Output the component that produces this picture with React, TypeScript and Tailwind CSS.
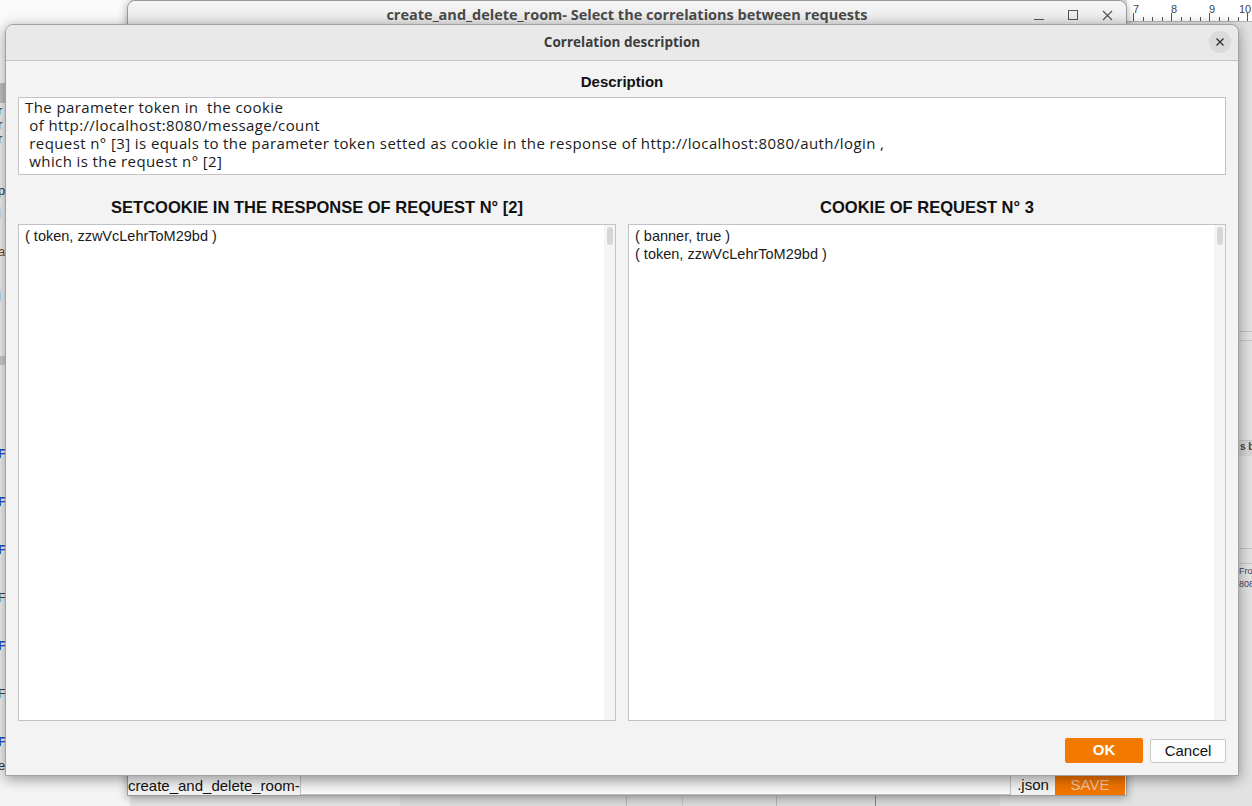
import React from 'react';

const ui = { fontFamily: '"Liberation Sans", Arial, sans-serif' };
const gtk = { fontFamily: '"Open Sans", "DejaVu Sans", sans-serif' };

function Scroller() {
  return (
    <div className="w-[11px] h-full bg-[#f5f5f5] flex justify-center pt-[2px] shrink-0">
      <div className="w-[6px] h-[18px] rounded-full bg-[#d6d6d6]" />
    </div>
  );
}

function ListPanel({ rows }: { rows: string[] }) {
  return (
    <div className="w-full h-[497px] bg-white border border-[#c3c3c3] flex">
      <div className="flex-1 pl-[6px] pt-[2px] text-[14.5px] leading-[18px] text-[#1a1a1a]" style={ui}>
        {rows.map((r) => (
          <div key={r} className="whitespace-pre">{r}</div>
        ))}
      </div>
      <Scroller />
    </div>
  );
}

function Ruler() {
  const ticks = Array.from({ length: 16 }, (_, i) => i);
  const labels = [
    { n: '7', x: 6 },
    { n: '8', x: 44 },
    { n: '9', x: 82 },
    { n: '10', x: 112 },
  ];
  return (
    <div className="relative h-[22px] bg-white border-b border-[#b5b5b5]">
      {labels.map((l) => (
        <span key={l.n} className="absolute top-[3px] text-[11px] leading-[12px] text-[#444] whitespace-nowrap" style={{ left: l.x }}>
          {l.n}
        </span>
      ))}
      {ticks.map((i) => (
        <span
          key={i}
          className="absolute bottom-0 w-[1px] bg-[#555]"
          style={{ left: 6 + i * 9.5, height: i % 4 === 0 ? 8 : 4 }}
        />
      ))}
    </div>
  );
}

export default function App() {
  const leftBits = [
    { t: 'r', top: 103, c: 'text-[#333]' },
    { t: 'r', top: 117, c: 'text-[#333]' },
    { t: 'r', top: 131, c: 'text-[#333]' },
    { t: 'p', top: 183, c: 'text-[#333]' },
    { t: 'j', top: 204, c: 'text-[#8a4a10]' },
    { t: 'a', top: 244, c: 'text-[#8a4a10]' },
    { t: 'j', top: 287, c: 'text-[#333]' },
    { t: 'F', top: 446, c: 'text-[#2a4fc0] font-bold' },
    { t: 'F', top: 494, c: 'text-[#2a4fc0] font-bold' },
    { t: 'F', top: 542, c: 'text-[#2a4fc0] font-bold' },
    { t: 'F', top: 590, c: 'text-[#444]' },
    { t: 'F', top: 638, c: 'text-[#2a4fc0] font-bold' },
    { t: 'F', top: 686, c: 'text-[#444]' },
    { t: 'F', top: 734, c: 'text-[#2a4fc0] font-bold' },
    { t: 'e', top: 758, c: 'text-[#333]' },
  ];

  return (
    <div className="relative w-[1252px] h-[806px] overflow-hidden bg-[#e4e4e4]" style={ui}>
      {/* left app behind everything */}
      <div className="absolute left-0 top-0 w-[130px] h-[806px] bg-[#f4f4f4]">
        <div className="h-[83px] bg-[#fafafa]" />
        <div className="h-[20px] bg-[#c4c4c4]" />
        <div className="h-[253px]" />
        <div className="h-[9px] bg-[#cfcfcf]" />
        {leftBits.map((b, i) => (
          <span key={i} className={`absolute left-[-2px] text-[13px] leading-[16px] ${b.c}`} style={{ top: b.top }}>
            {b.t}
          </span>
        ))}
      </div>

      {/* right app with ruler */}
      <div className="absolute left-[1127px] top-0 w-[125px] h-[806px] bg-[#e2e2e2]">
        <Ruler />
        <div className="absolute left-0 right-0 top-[331px] h-[1px] bg-[#c4c4c4]" />
        <div className="absolute left-0 right-0 top-[340px] h-[1px] bg-[#c8c8c8]" />
        <div className="absolute left-0 right-0 top-[440px] h-[16px] bg-[#d6d6d6] border-t border-[#c4c4c4]" />
        <span className="absolute left-[113px] top-[440px] text-[10px] leading-[14px] font-bold text-[#444] whitespace-nowrap">s be</span>
        <div className="absolute left-0 right-0 top-[548px] h-[1px] bg-[#c4c4c4]" />
        <div className="absolute left-0 right-0 top-[563px] h-[1px] bg-[#c8c8c8]" />
        <span className="absolute left-[112px] top-[565px] text-[9px] leading-[12px] text-[#445] whitespace-nowrap">Fror</span>
        <span className="absolute left-[112px] top-[578px] text-[9px] leading-[12px] text-[#445] whitespace-nowrap">808</span>
      </div>

      {/* strip below main window */}
      <div className="absolute left-[400px] top-[795px] w-[600px] h-[11px] bg-[#dcdcdc] flex">
        <div className="w-[227px] border-r border-[#b8b8b8]" />
        <div className="w-[56px] border-r border-[#c8c8c8]" />
        <div className="w-[94px] border-r border-[#b8b8b8]" />
        <div className="w-[99px] border-r border-[#888]" />
      </div>

      {/* main window behind dialog */}
      <div className="absolute left-[127px] top-0 w-[1000px] h-[796px] bg-[#f2f2f2] rounded-t-[8px] border border-[#9a9a9a] shadow-[0_2px_10px_rgba(0,0,0,0.35)] flex flex-col">
        <div className="h-[28px] bg-gradient-to-b from-[#f6f6f6] to-[#e6e6e6] rounded-t-[8px] relative flex items-center justify-center">
          <span className="text-[14.5px] font-bold text-[#4a4a4a] mb-[1px]" style={gtk}>
            create_and_delete_room- Select the correlations between requests
          </span>
          <div className="absolute right-[13px] top-0 h-[28px] flex items-center gap-[24px]">
            <span className="w-[10px] h-[1px] bg-[#555] mt-[9px]" />
            <span className="w-[10px] h-[10px] border border-[#555]" />
            <svg width="11" height="11" viewBox="0 0 11 11" stroke="#555" strokeWidth="1.2">
              <path d="M1 1L10 10M10 1L1 10" />
            </svg>
          </div>
        </div>
        <div className="flex-1" />
        <div className="h-[20px] flex items-stretch text-[15px] text-[#111]">
          <div className="w-[172px] flex items-center leading-none">create_and_delete_room-</div>
          <div className="w-[711px] bg-gradient-to-b from-[#e6e6e6] to-[#fafafa] border border-[#bfbfbf]" />
          <div className="w-[44px] flex items-center justify-center">.json</div>
          <div className="w-[70px] bg-[#f27400] text-[#f8c79e] flex items-center justify-center">SAVE</div>
        </div>
      </div>

      {/* dialog */}
      <div className="absolute left-[5px] top-[24px] w-[1234px] h-[752px] bg-[#f3f3f3] rounded-t-[8px] border border-[#a2a2a2] shadow-[0_3px_14px_rgba(0,0,0,0.4)] flex flex-col">
        <div className="h-[36px] bg-[#e9e9e9] rounded-t-[8px] border-b border-[#c4c4c4] relative flex items-center justify-center">
          <span className="text-[13.5px] font-bold text-[#3c3c3c]" style={gtk}>
            Correlation description
          </span>
          <div className="absolute right-[7px] top-[6px] w-[22px] h-[22px] rounded-full bg-[#dadada] flex items-center justify-center">
            <svg width="10" height="10" viewBox="0 0 10 10" stroke="#333" strokeWidth="1.4">
              <path d="M1.5 1.5L8.5 8.5M8.5 1.5L1.5 8.5" />
            </svg>
          </div>
        </div>

        <div className="px-[12px] flex flex-col">
          <div className="h-[36px] pt-[6px] flex items-center justify-center text-[15px] font-bold text-[#111]">Description</div>
          <div className="h-[78px] bg-white border border-[#c3c3c3] px-[6px] pt-[0px] text-[15px] leading-[18px] tracking-[0.4px] text-[#1a1a1a]" style={gtk}>
            <div className="whitespace-pre">The parameter token in  the cookie</div>
            <div className="whitespace-pre"> of http://localhost:8080/message/count</div>
            <div className="whitespace-pre"> request n° [3] is equals to the parameter token setted as cookie in the response of http://localhost:8080/auth/login ,</div>
            <div className="whitespace-pre"> which is the request n° [2]</div>
          </div>

          <div className="flex gap-[12px] mt-[18px]">
            <div className="flex-1 flex flex-col">
              <div className="h-[31px] flex items-center justify-center text-[16.5px] font-bold text-[#111] pb-[3px]">
                SETCOOKIE IN THE RESPONSE OF REQUEST N° [2]
              </div>
              <ListPanel rows={['( token, zzwVcLehrToM29bd )']} />
            </div>
            <div className="flex-1 flex flex-col">
              <div className="h-[31px] flex items-center justify-center text-[16.5px] font-bold text-[#111] pb-[3px]">
                COOKIE OF REQUEST N° 3
              </div>
              <ListPanel rows={['( banner, true )', '( token, zzwVcLehrToM29bd )']} />
            </div>
          </div>

          <div className="flex justify-end items-center gap-[7px] mt-[17px]">
            <button className="w-[78px] h-[25px] bg-[#f47900] rounded-[2px] text-white font-bold text-[15px]">OK</button>
            <button className="w-[76px] h-[24px] bg-[#fdfdfd] border border-[#c9c9c9] rounded-[2px] text-[15px] text-[#111]">Cancel</button>
          </div>
        </div>
      </div>
    </div>
  );
}
